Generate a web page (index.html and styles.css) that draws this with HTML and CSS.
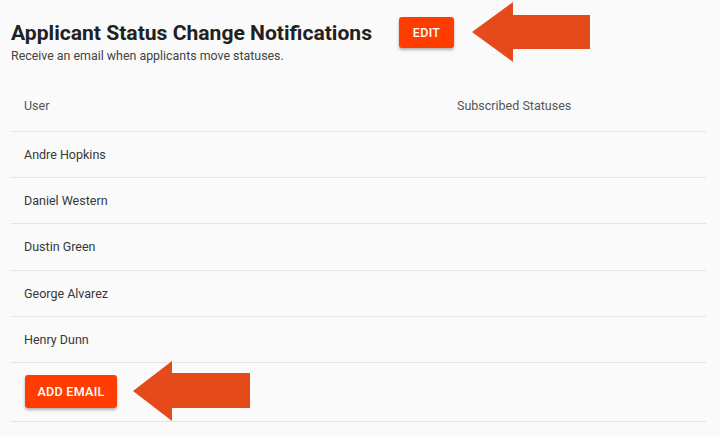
FILE: index.html
```html
<!DOCTYPE html>
<html>
<head>
<meta charset="utf-8">
<link rel="stylesheet" href="styles.css">
</head>
<body>
<div class="page">
  <div class="header">
    <div class="titles">
      <h1 class="title">Applicant Status Change Notifications</h1>
      <p class="subtitle">Receive an email when applicants move statuses.</p>
    </div>
    <button class="btn btn-edit">EDIT</button>
    <svg class="arrow arrow-top" width="120" height="62" viewBox="0 0 120 62"><polygon points="0,30 41,0 41,13 118,13 118,47 41,47 41,60" fill="#e54b1a"/></svg>
  </div>
  <div class="table">
    <div class="row head"><div class="cell">User</div><div class="cell">Subscribed Statuses</div></div>
    <div class="row"><div class="cell">Andre Hopkins</div><div class="cell"></div></div>
    <div class="row"><div class="cell">Daniel Western</div><div class="cell"></div></div>
    <div class="row"><div class="cell">Dustin Green</div><div class="cell"></div></div>
    <div class="row"><div class="cell">George Alvarez</div><div class="cell"></div></div>
    <div class="row"><div class="cell">Henry Dunn</div><div class="cell"></div></div>
    <div class="row foot">
      <div class="cell foot-cell">
        <button class="btn btn-add">ADD EMAIL</button>
        <svg class="arrow arrow-bottom" width="118" height="62" viewBox="0 0 118 62"><polygon points="0,30 39,0 39,12 117,12 117,47 39,47 39,60" fill="#e54b1a"/></svg>
      </div>
    </div>
  </div>
</div>
</body>
</html>
```
FILE: styles.css
```css
html, body {
  margin: 0;
  padding: 0;
  background: #fafafa;
  font-family: Roboto, "Liberation Sans", sans-serif;
}
.page {
  padding: 2px 14px 0 11px;
}
.header {
  display: flex;
  align-items: flex-start;
  height: 78px;
}
.titles {
  padding-top: 17px;
}
.title {
  margin: 0;
  font-size: 21.1px;
  font-weight: 700;
  color: #212121;
  line-height: 27px;
}
.subtitle {
  margin: 2px 0 0;
  font-size: 12.4px;
  color: #444;
  line-height: 15px;
}
.btn {
  border: none;
  background: #ff3d00;
  color: #fff;
  font-family: Roboto, "Liberation Sans", sans-serif;
  font-weight: 500;
  font-size: 12.5px;
  border-radius: 3px;
  box-shadow: 0 2px 3px rgba(0,0,0,0.3);
  letter-spacing: 0.3px;
}
.btn-edit {
  margin: 15px 0 0 27px;
  width: 55px;
  height: 31px;
}
.arrow {
  display: block;
  flex: none;
}
.arrow-top {
  margin-left: 18px;
}
.table {
  width: 695px;
}
.row {
  display: grid;
  grid-template-columns: 433px 1fr;
  height: 46.2px;
  border-bottom: 1.5px solid #e3e3e3;
  box-sizing: border-box;
  align-items: center;
  font-size: 12.5px;
  color: #383838;
}
.row.head {
  height: 52px;
  color: #555;
}
.cell {
  padding-left: 13px;
}
.row.foot {
  display: flex;
  height: 59.5px;
}
.foot-cell {
  display: flex;
  align-items: center;
  padding-left: 14px;
}
.btn-add {
  width: 92px;
  height: 33px;
  margin-top: -1px;
}
.arrow-bottom {
  margin-left: 16px;
}
```
